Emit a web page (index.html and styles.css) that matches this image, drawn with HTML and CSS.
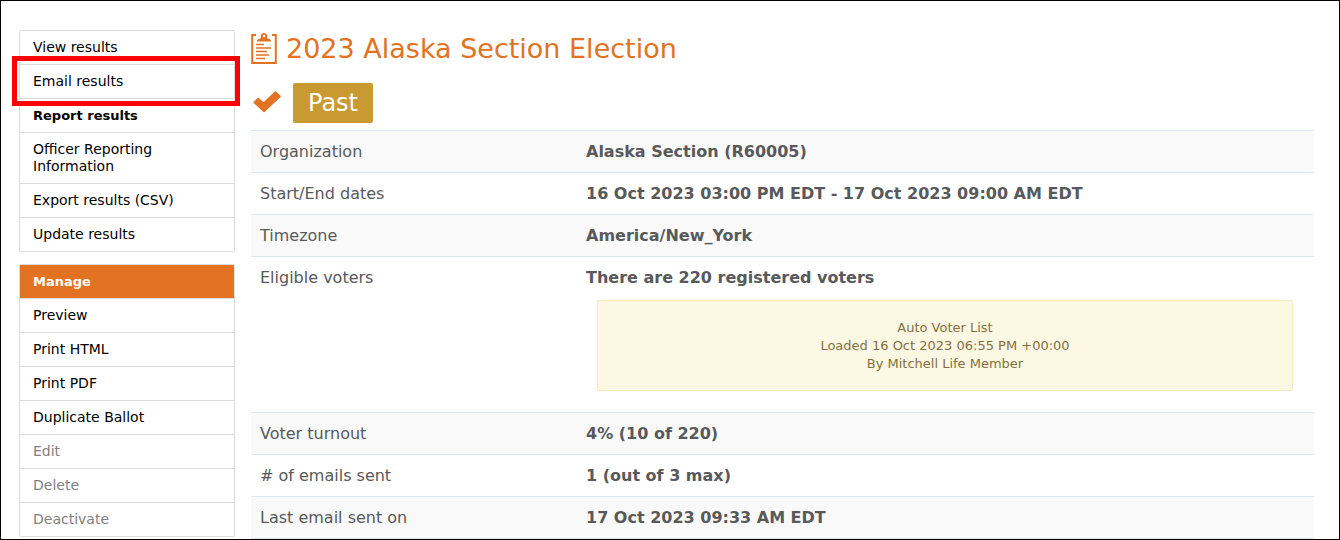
FILE: index.html
```
<!DOCTYPE html>
<html lang="en">
<head>
  <meta charset="utf-8">
  <meta name="viewport" content="width=device-width, initial-scale=1.0">
  <title>2023 Alaska Section Election</title>
  <link rel="stylesheet" href="styles.css">
</head>
<body>
  <div class="page">
    <nav class="sidebar">
      <ul class="menu">
        <li><a href="#">View results</a></li>
        <li class="highlight"><a href="#">Email results</a></li>
        <li class="active"><a href="#">Report results</a></li>
        <li><a href="#">Officer Reporting Information</a></li>
        <li><a href="#">Export results (CSV)</a></li>
        <li><a href="#">Update results</a></li>
      </ul>
      <ul class="menu">
        <li class="menu-title">Manage</li>
        <li><a href="#">Preview</a></li>
        <li><a href="#">Print HTML</a></li>
        <li><a href="#">Print PDF</a></li>
        <li><a href="#">Duplicate Ballot</a></li>
        <li class="disabled"><a href="#">Edit</a></li>
        <li class="disabled"><a href="#">Delete</a></li>
        <li class="disabled"><a href="#">Deactivate</a></li>
      </ul>
    </nav>

    <main class="content">
      <h1>
        <svg class="clipboard" viewBox="0 0 26 32" width="26" height="32" fill="none" stroke="#e37222">
          <path d="M5 2H1.200V30H24.800V2H21" stroke-width="2"/>
          <path d="M6 8.500V7.500Q7 5.500 10 5V3A3 3 0 0 1 16 3V5Q19 5.500 20 7.500V8.500Z" fill="#e37222" stroke="none"/>
          <circle cx="13" cy="3" r="1.200" fill="#fff" stroke="none"/>
          <path d="M5 11.500h8M5 15h15M5 18.500h11M5 22h13M5 25.500h9" stroke-width="1.300"/>
        </svg>
        2023 Alaska Section Election
      </h1>
      <div class="status">
        <svg class="check" viewBox="0 0 28 24" width="28" height="24" fill="#e37222">
          <path d="M.7 10.800 4.700 6.900Q5.300 6.300 5.900 6.900L10.500 11.200 21.800.6Q22.400 0 23 .6L27.500 4.800Q28.100 5.400 27.500 6L11.600 21Q11 21.600 10.400 21L.7 12Q.1 11.400.7 10.800Z"/>
        </svg>
        <span class="badge">Past</span>
      </div>
      <table class="details">
        <tr><th scope="row">Organization</th><td>Alaska Section (R60005)</td></tr>
        <tr><th scope="row">Start/End dates</th><td>16 Oct 2023 03:00 PM EDT - 17 Oct 2023 09:00 AM EDT</td></tr>
        <tr><th scope="row">Timezone</th><td>America/New_York</td></tr>
        <tr>
          <th scope="row">Eligible voters</th>
          <td>
            There are 220 registered voters
            <div class="note">
              Auto Voter List<br>
              Loaded 16 Oct 2023 06:55 PM +00:00<br>
              By Mitchell Life Member
            </div>
          </td>
        </tr>
        <tr><th scope="row">Voter turnout</th><td>4% (10 of 220)</td></tr>
        <tr><th scope="row"># of emails sent</th><td>1 (out of 3 max)</td></tr>
        <tr><th scope="row">Last email sent on</th><td>17 Oct 2023 09:33 AM EDT</td></tr>
      </table>
    </main>
  </div>
</body>
</html>
```

FILE: styles.css
```
* {
  box-sizing: border-box;
}

body {
  margin: 0;
  font-family: Verdana, "DejaVu Sans", sans-serif;
  color: #58595b;
  background: #fff;
}

.page {
  display: flex;
  gap: 16px;
  height: 100vh;
  padding: 29px 25px 0 18px;
  border: 1px solid #000;
  overflow: hidden;
}

.sidebar {
  flex: 0 0 216px;
  font-size: 14px;
  line-height: 17px;
}

.menu {
  list-style: none;
  margin: 0 0 12px;
  padding: 0;
  border: 1px solid #dcdcdc;
  border-radius: 2px;
}

.menu li {
  position: relative;
  border-bottom: 1px solid #dcdcdc;
}

.menu li:last-child {
  border-bottom: 0;
}

.menu a,
.menu-title {
  display: block;
  padding: 8px 50px 8px 13px;
  color: #000;
  text-decoration: none;
}

.menu .menu-title {
  background: #e37222;
  color: #fff;
  font-size: 13px;
  font-weight: bold;
}

.menu .active a {
  font-size: 13px;
  font-weight: bold;
}

.menu .disabled a {
  color: #808080;
}

/* red frame around the menu entry */
.highlight::after {
  content: '';
  position: absolute;
  top: -9px;
  right: -6px;
  bottom: -8px;
  left: -8px;
  border: 5px solid #f00;
  z-index: 1;
}

.content {
  flex: 1;
  min-width: 0;
}

h1 {
  display: flex;
  align-items: center;
  gap: 9px;
  margin: 0;
  font-size: 27px;
  line-height: 38px;
  font-weight: normal;
  color: #e37222;
}

.status {
  display: flex;
  align-items: center;
  gap: 12px;
  margin: 15px 0 7px;
  padding-left: 2px;
}

.badge {
  padding: 0 15px;
  font-size: 24px;
  line-height: 40px;
  color: #fff;
  background: #ca9a32;
  border-radius: 2px;
}

.details {
  width: 100%;
  border-collapse: collapse;
  font-size: 16px;
  line-height: 23px;
}

.details tr {
  border-top: 1px solid #dfe6ef;
}

.details tr:nth-child(odd) {
  background: #f9f9f9;
}

.details tr:last-child {
  border-bottom: 1px solid #dfe6ef;
}

.details th,
.details td {
  padding: 9px;
  text-align: left;
  vertical-align: top;
}

.details th {
  width: 326px;
  font-weight: normal;
}

.details td {
  font-weight: bold;
}

.note {
  margin: 11px 12px 12px 11px;
  padding: 18px 18px 17px;
  font-size: 13px;
  line-height: 18px;
  font-weight: normal;
  text-align: center;
  color: #85703f;
  background: #fcf8e3;
  border: 1px solid #fbe8c0;
  border-radius: 2px;
}
```
